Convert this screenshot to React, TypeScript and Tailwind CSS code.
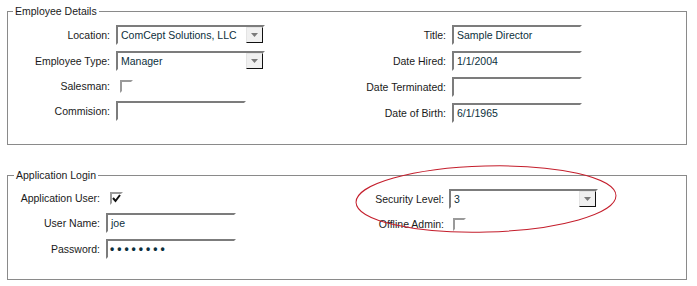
import React from "react";

const TextBox = ({ value, className }: { value?: string; className: string }) => (
  <div
    className={`${className} h-[20px] border-2 border-t-[#7c7c7c] border-l-[#7c7c7c] border-r-white border-b-white pl-[3px] flex items-center text-[#0c2f3c] whitespace-nowrap overflow-hidden`}
  >
    {value}
  </div>
);

const DropArrow = () => (
  <div className="w-[17px] h-[16px] border border-t-[#e4e4e4] border-l-[#e4e4e4] border-r-[#111] border-b-[#111] bg-[#f0f0f0] flex items-center justify-center">
    <svg width="9" height="6" viewBox="0 0 9 6">
      <polygon points="1,1 8,1 4.5,5" fill="#7a7a7a" />
    </svg>
  </div>
);

const Combo = ({ value }: { value: string }) => (
  <div className="w-[149px] h-[20px] border-2 border-t-[#7c7c7c] border-l-[#7c7c7c] border-r-white border-b-white flex items-center">
    <div className="flex-1 pl-[3px] text-[#0c2f3c] whitespace-nowrap overflow-hidden">{value}</div>
    <DropArrow />
  </div>
);

const CheckBox = ({ checked }: { checked?: boolean }) => (
  <div className="ml-[4px] w-[13px] h-[13px] border-2 border-t-[#9a9a9a] border-l-[#9a9a9a] border-r-white border-b-white flex items-center justify-center">
    {checked && (
      <svg width="9" height="9" viewBox="0 0 9 9">
        <path d="M1 4 L3.5 7 L8 1" stroke="#111" strokeWidth="2" fill="none" />
      </svg>
    )}
  </div>
);

const Row = ({
  label,
  labelClass,
  gapClass,
  heightClass,
  children,
}: {
  label: string;
  labelClass: string;
  gapClass: string;
  heightClass: string;
  children: React.ReactNode;
}) => (
  <div className={`flex items-center ${gapClass} ${heightClass}`}>
    <div className={`${labelClass} text-right whitespace-nowrap`}>{label}</div>
    {children}
  </div>
);

export default function App() {
  return (
    <div className="relative w-[697px] h-[286px] bg-white pt-[4px] pl-[7px] text-[10.5px] leading-[14px] text-[#1a1a1a] font-['Liberation_Sans',Arial,sans-serif]">
      {/* Employee Details */}
      <fieldset className="w-[680px] h-[141px] border border-[#8a8a8a]">
        <legend className="ml-[5px] px-[2px] leading-[14px]">Employee Details</legend>
        <div className="flex pt-[7px]">
          <div className="w-[288px] flex flex-col gap-[6px]">
            <Row label="Location:" labelClass="w-[102px]" gapClass="gap-[6px]" heightClass="h-[20px]">
              <Combo value="ComCept Solutions, LLC" />
            </Row>
            <Row label="Employee Type:" labelClass="w-[102px]" gapClass="gap-[6px]" heightClass="h-[20px]">
              <Combo value="Manager" />
            </Row>
            <Row label="Salesman:" labelClass="w-[102px]" gapClass="gap-[6px]" heightClass="h-[18px]">
              <CheckBox />
            </Row>
            <Row label="Commision:" labelClass="w-[102px]" gapClass="gap-[6px]" heightClass="h-[20px]">
              <TextBox className="w-[130px]" />
            </Row>
          </div>
          <div className="flex flex-col gap-[6px]">
            <Row label="Title:" labelClass="w-[150px]" gapClass="gap-[6px]" heightClass="h-[20px]">
              <TextBox className="w-[130px]" value="Sample Director" />
            </Row>
            <Row label="Date Hired:" labelClass="w-[150px]" gapClass="gap-[6px]" heightClass="h-[20px]">
              <TextBox className="w-[130px]" value="1/1/2004" />
            </Row>
            <Row label="Date Terminated:" labelClass="w-[150px]" gapClass="gap-[6px]" heightClass="h-[20px]">
              <TextBox className="w-[130px]" />
            </Row>
            <Row label="Date of Birth:" labelClass="w-[150px]" gapClass="gap-[6px]" heightClass="h-[20px]">
              <TextBox className="w-[130px]" value="6/1/1965" />
            </Row>
          </div>
        </div>
      </fieldset>

      {/* Application Login */}
      <fieldset className="mt-[23px] w-[680px] h-[112px] border border-[#8a8a8a]">
        <legend className="ml-[6px] px-[2px] leading-[14px]">Application Login</legend>
        <div className="flex pt-[7px]">
          <div className="w-[286px] flex flex-col gap-[6px]">
            <Row label="Application User:" labelClass="w-[92px]" gapClass="gap-[6px]" heightClass="h-[18px]">
              <CheckBox checked />
            </Row>
            <Row label="User Name:" labelClass="w-[92px]" gapClass="gap-[6px]" heightClass="h-[20px]">
              <TextBox className="w-[130px]" value="joe" />
            </Row>
            <Row label="Password:" labelClass="w-[92px]" gapClass="gap-[6px]" heightClass="h-[20px]">
              <div className="w-[130px] h-[20px] border-2 border-t-[#7c7c7c] border-l-[#7c7c7c] border-r-white border-b-white pl-[2px] flex items-center text-[#0c2f3c] text-[12px] font-bold tracking-[3px]">
                ••••••••
              </div>
            </Row>
          </div>
          <div className="flex flex-col gap-[6px]">
            <Row label="Security Level:" labelClass="w-[150px]" gapClass="gap-[5px]" heightClass="h-[20px]">
              <Combo value="3" />
            </Row>
            <Row label="Offline Admin:" labelClass="w-[150px]" gapClass="gap-[5px]" heightClass="h-[18px]">
              <CheckBox />
            </Row>
          </div>
        </div>
      </fieldset>

      {/* annotation */}
      <svg className="absolute left-0 top-0 pointer-events-none" width="697" height="286">
        <ellipse cx="486" cy="199" rx="130" ry="33" fill="none" stroke="#c41e2c" strokeWidth="1" transform="rotate(-1.5 486 199)" />
      </svg>
    </div>
  );
}
